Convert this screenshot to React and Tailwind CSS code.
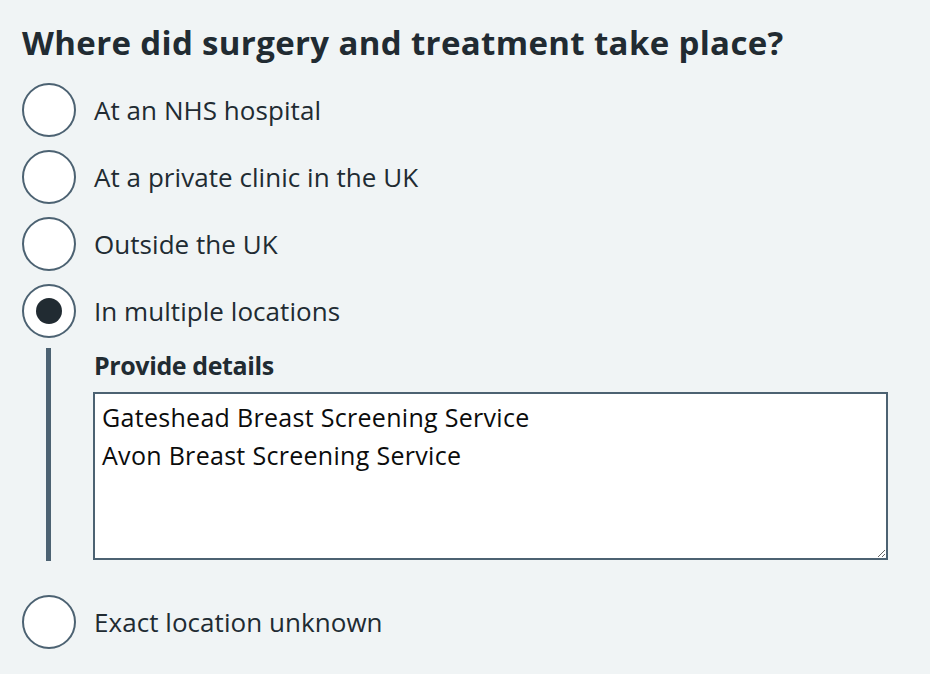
const options = [
  { label: "At an NHS hospital", checked: false },
  { label: "At a private clinic in the UK", checked: false },
  { label: "Outside the UK", checked: false },
  { label: "In multiple locations", checked: true },
];

const Radio = ({ label, checked }) => (
  <label className="flex items-center h-[54px]">
    <span className="w-[54px] h-[54px] shrink-0 rounded-full border-2 border-[#4c6272] bg-white flex items-center justify-center">
      {checked && <span className="w-[26px] h-[26px] rounded-full bg-[#212b32]" />}
    </span>
    <span className="ml-[18px] text-[26px] leading-none tracking-[0.05px] text-[#212b32]">{label}</span>
  </label>
);

export default function App() {
  return (
    <div
      className="min-h-screen bg-[#f0f4f5] pl-[22px] pt-[21px]"
      style={{ fontFamily: '"Open Sans", "Noto Sans", Arial, sans-serif' }}
    >
      <h1 className="text-[33px] font-bold leading-[44px] tracking-[0.35px] text-[#212b32]">
        Where did surgery and treatment take place?
      </h1>
      <div className="mt-[18px] flex flex-col gap-[13px]">
        {options.map((o) => (
          <Radio key={o.label} {...o} />
        ))}
      </div>
      <div className="ml-[24px] mt-[10px] border-l-[5px] border-[#4c6272] pl-[42px] pt-[1px] h-[213px]">
        <div className="ml-[1px] text-[25px] font-bold leading-[32px] tracking-[-0.4px] text-[#212b32]">Provide details</div>
        <textarea
          className="mt-[11px] block w-[795px] h-[168px] border-2 border-[#4c6272] bg-white px-[7px] py-[4px] text-[25px] leading-[38px] tracking-[0.3px] text-[#0b0c0c] outline-none resize-y"
          defaultValue={"Gateshead Breast Screening Service\nAvon Breast Screening Service"}
        />
      </div>
      <div className="mt-[34px]">
        <Radio label="Exact location unknown" checked={false} />
      </div>
    </div>
  );
}
